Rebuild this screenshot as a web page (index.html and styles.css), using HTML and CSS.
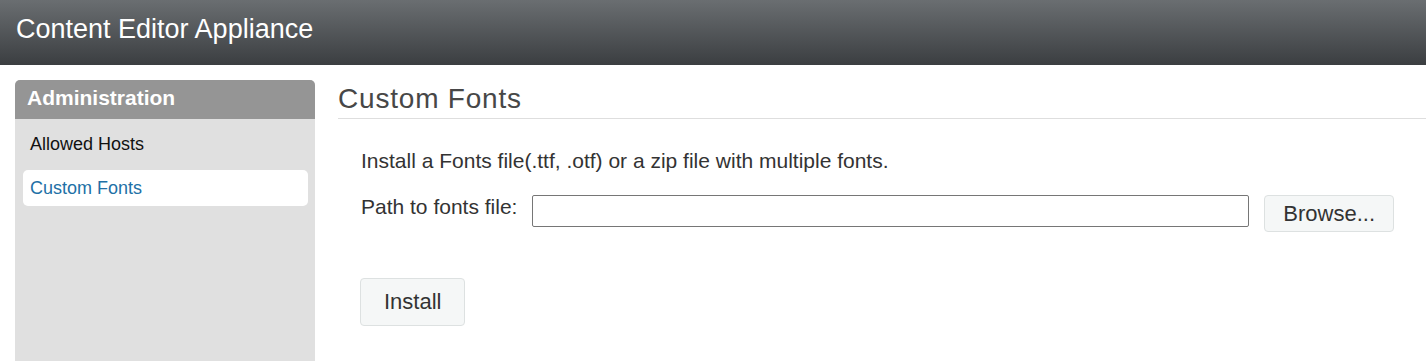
FILE: index.html
```html
<!DOCTYPE html>
<html lang="en">
<head>
    <meta charset="UTF-8">
    <meta name="viewport" content="width=device-width, initial-scale=1.0">
    <title>Custom Fonts - Content Editor Appliance</title>
    <link rel="stylesheet" href="styles.css">
</head>
<body>

<header class="app-header">
    <h1>Content Editor Appliance</h1>
</header>

<div class="layout">
    <!-- Left navigation -->
    <nav class="sidebar">
        <h3 class="sidebar-title">Administration</h3>
        <ul class="nav-list">
            <li class="nav-item"><a href="#">Allowed Hosts</a></li>
            <li class="nav-item active"><a href="#">Custom Fonts</a></li>
        </ul>
    </nav>

    <!-- Page content -->
    <main class="content">
        <h2 class="page-title">Custom Fonts</h2>
        <div class="page-body">
            <p class="intro">Install a Fonts file(.ttf, .otf) or a zip file with multiple fonts.</p>
            <div class="file-row">
                <label class="file-label" for="font-path">Path to fonts file:</label>
                <input class="file-input" id="font-path" type="text">
                <button class="btn browse-btn" type="button">Browse...</button>
            </div>
            <button class="btn install-btn" type="button">Install</button>
        </div>
    </main>
</div>

</body>
</html>
```

FILE: styles.css
```css
/* General Body Styling */
body {
    font-family: 'Liberation Sans', Arial, sans-serif;
    margin: 0;
    padding: 0;
    background: #fff;
    color: #333;
}

/* Top bar */
.app-header {
    height: 65px;
    box-sizing: border-box;
    padding: 14px 16px 0;
    background: linear-gradient(to bottom, #6a6e71, #3b3e41);
}

.app-header h1 {
    margin: 0;
    font-size: 27px;
    font-weight: normal;
    line-height: 31px;
    color: #fff;
}

/* Two column layout */
.layout {
    display: flex;
    align-items: flex-start;
    padding-top: 15px;
}

/* Sidebar */
.sidebar {
    width: 300px;
    flex-shrink: 0;
    margin-left: 15px;
    min-height: calc(100vh - 80px);
    background: #e0e0e0;
    border-radius: 5px 5px 0 0;
    overflow: hidden;
}

.sidebar-title {
    margin: 0;
    height: 39px;
    box-sizing: border-box;
    padding-left: 12px;
    background: #959595;
    color: #fff;
    font-size: 21px;
    font-weight: bold;
    line-height: 36px;
}

.nav-list {
    list-style: none;
    margin: 0;
    padding: 7px 7px 7px 8px;
    display: flex;
    flex-direction: column;
    gap: 8px;
}

.nav-item {
    height: 36px;
    border-radius: 5px;
}

.nav-item a {
    display: block;
    padding-left: 7px;
    font-size: 18px;
    line-height: 36px;
    color: #111;
    text-decoration: none;
}

.nav-item.active {
    background: #fff;
}

.nav-item.active a {
    color: #2170a6;
}

/* Main content */
.content {
    flex: 1;
    margin-left: 23px;
}

.page-title {
    margin: 0;
    height: 39px;
    box-sizing: border-box;
    font-size: 28px;
    font-weight: normal;
    letter-spacing: 0.8px;
    line-height: 38px;
    color: #474747;
    border-bottom: 1px solid #dedede;
}

.page-body {
    padding: 0 32px 0 23px;
}

.intro {
    margin: 30px 0 22px;
    font-size: 21px;
    line-height: 24px;
}

.file-row {
    display: flex;
    align-items: flex-start;
}

.file-label {
    font-size: 21px;
    line-height: 24px;
    margin-right: 15px;
}

.file-input {
    flex: 1;
    height: 32px;
    box-sizing: border-box;
    margin: 0 15px 0 0;
    border: 1px solid #767676;
    border-radius: 2px;
    padding: 0 6px;
    font-family: inherit;
    font-size: 18px;
}

/* Buttons */
.btn {
    font-family: inherit;
    font-size: 22px;
    color: #333;
    background: #f5f7f7;
    border: 1px solid #dde1e1;
    border-radius: 4px;
    cursor: pointer;
}

.browse-btn {
    height: 37px;
    padding: 0 18px;
    line-height: 34px;
}

.install-btn {
    display: block;
    height: 48px;
    margin: 46px 0 0 -1px;
    padding: 0 23px;
    line-height: 46px;
}
```
